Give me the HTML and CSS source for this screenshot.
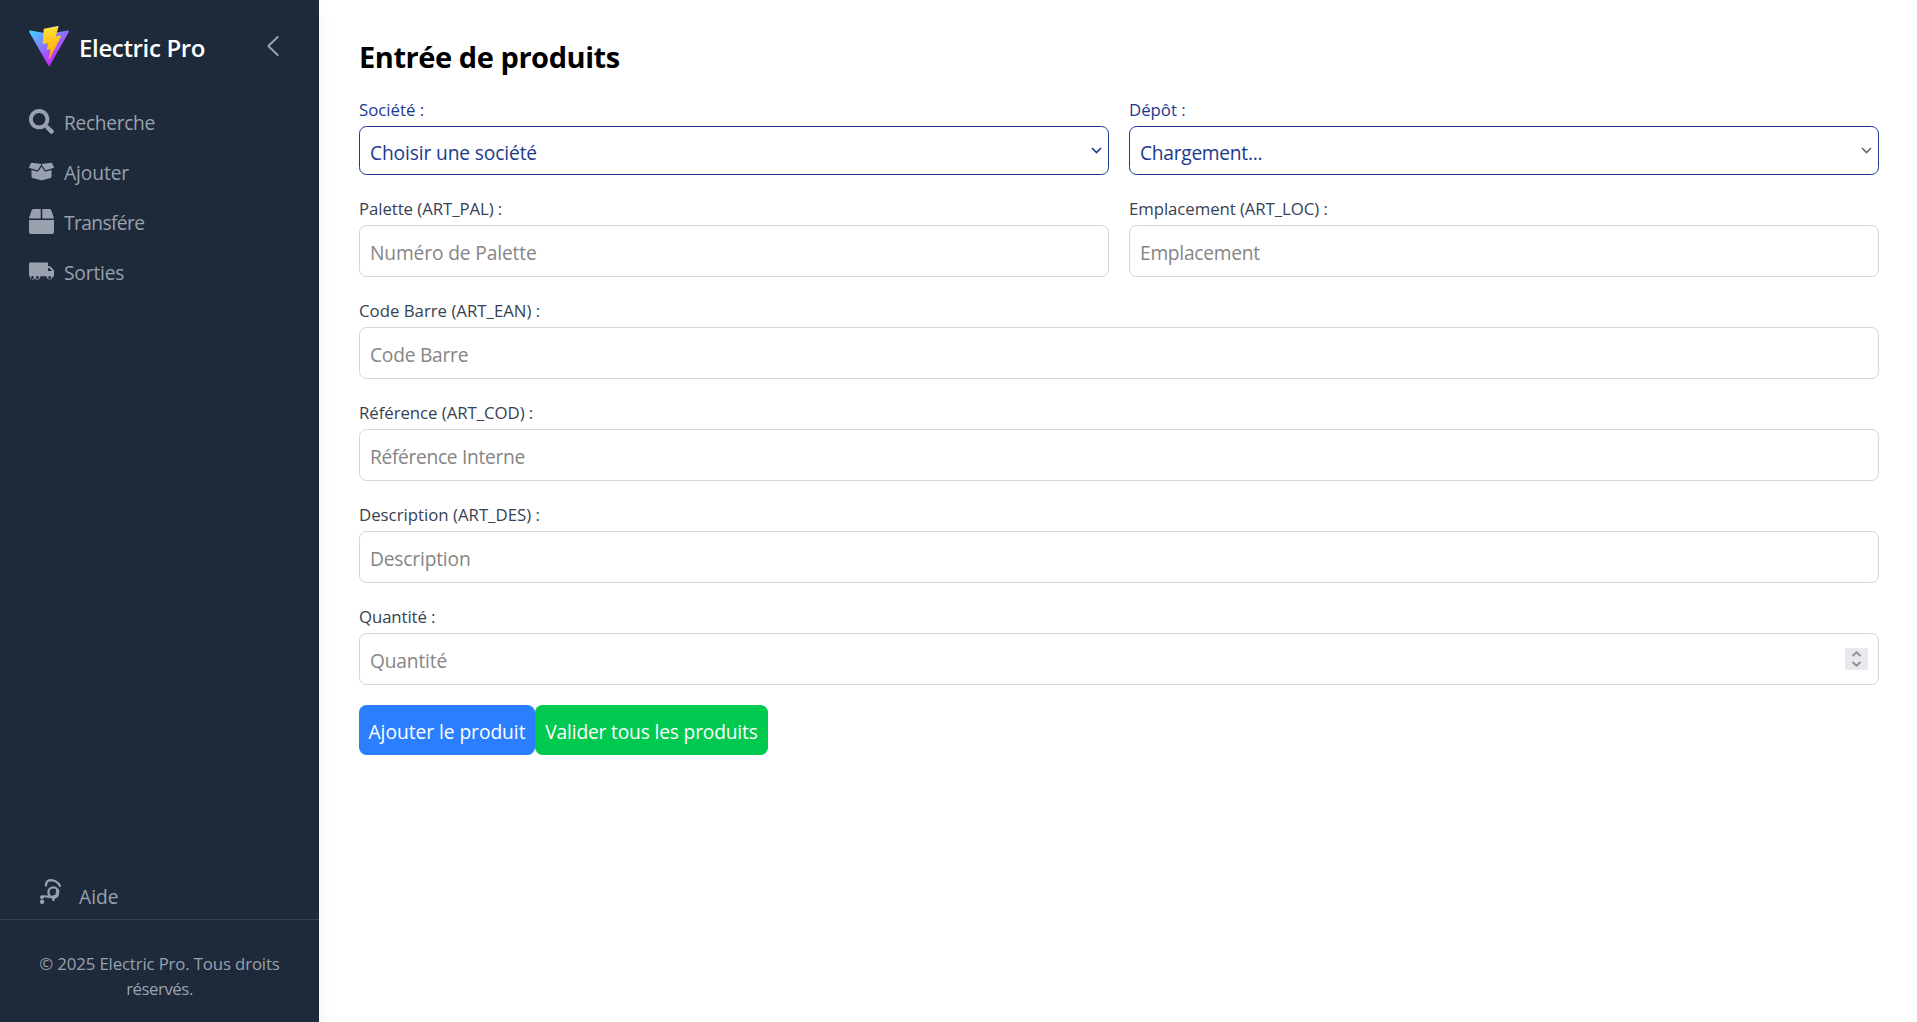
FILE: index.html
```html
<!DOCTYPE html>
<html lang="fr">
<head>
<meta charset="utf-8">
<title>Electric Pro</title>
<link rel="stylesheet" href="styles.css">
</head>
<body>
<div class="app">
  <aside class="sidebar">
    <header class="brand">
      <svg class="logo" viewBox="0 0 256 257" preserveAspectRatio="xMidYMid">
        <defs>
          <linearGradient id="g1" x1="-.828%" x2="57.636%" y1="7.652%" y2="78.411%"><stop offset="0%" stop-color="#41D1FF"/><stop offset="100%" stop-color="#BD34FE"/></linearGradient>
          <linearGradient id="g2" x1="43.376%" x2="50.316%" y1="2.242%" y2="89.03%"><stop offset="0%" stop-color="#FFEA83"/><stop offset="8.333%" stop-color="#FFDD35"/><stop offset="100%" stop-color="#FFA800"/></linearGradient>
        </defs>
        <path fill="url(#g1)" d="M255.153 37.938L134.897 252.976c-2.483 4.44-8.862 4.466-11.382.048L.875 37.958c-2.746-4.814 1.371-10.646 6.827-9.67l120.385 21.517a6.537 6.537 0 0 0 2.322-.004l117.867-21.483c5.438-.991 9.574 4.796 6.877 9.62Z"/>
        <path fill="url(#g2)" d="M185.432.063L96.44 17.501a3.268 3.268 0 0 0-2.634 3.014l-5.474 92.456a3.268 3.268 0 0 0 3.997 3.378l24.777-5.718c2.318-.535 4.413 1.507 3.936 3.838l-7.361 36.047c-.495 2.426 1.782 4.5 4.151 3.78l15.304-4.649c2.372-.72 4.652 1.36 4.15 3.788l-11.698 56.621c-.732 3.542 3.979 5.473 5.943 2.437l1.313-2.028l72.516-144.72c1.215-2.423-.88-5.186-3.54-4.672l-25.505 4.922c-2.396.462-4.435-1.77-3.759-4.114l16.646-57.705c.677-2.35-1.37-4.583-3.769-4.113Z"/>
      </svg>
      <span class="brand-name">Electric Pro</span>
      <svg class="collapse" viewBox="0 0 12 20"><path d="M10.6 1 1.4 10l9.2 9"/></svg>
    </header>
    <nav class="menu">
      <a class="item"><svg class="icon" viewBox="0 0 512 512"><path d="M505 442.7L405.3 343c-4.500-4.500-10.600-7-17-7H372c27.600-35.300 44-79.700 44-128C416 93.100 322.900 0 208 0S0 93.100 0 208s93.100 208 208 208c48.300 0 92.700-16.400 128-44v16.300c0 6.400 2.500 12.500 7 17l99.700 99.700c9.400 9.400 24.600 9.400 33.900 0l28.300-28.300c9.400-9.400 9.400-24.600.1-34zM208 336c-70.700 0-128-57.200-128-128 0-70.700 57.200-128 128-128 70.700 0 128 57.200 128 128 0 70.700-57.200 128-128 128z"/></svg><span class="t-search">Recherche</span></a>
      <a class="item"><svg class="icon" viewBox="0 0 640 512"><path d="M425.700 256c-16.900 0-32.800-9-41.400-23.400L320 126l-64.200 106.600c-8.700 14.500-24.600 23.500-41.500 23.500-4.500 0-9-.600-13.300-1.900L64 215v178c0 14.700 10 27.500 24.200 31l216.200 54.100c10.200 2.500 20.900 2.500 31 0L551.800 424c14.200-3.600 24.200-16.400 24.200-31V215l-137 39.100c-4.300 1.300-8.800 1.900-13.300 1.900zm212.600-112.200L586.800 41c-3.100-6.200-9.800-9.800-16.700-8.900L320 64l91.700 152.100c3.800 6.300 11.400 9.300 18.500 7.300l197.900-56.500c9.900-2.900 14.700-13.900 10.200-23.100zM53.200 41L1.700 143.800c-4.600 9.200.3 20.200 10.100 23l197.900 56.500c7.100 2 14.700-1 18.500-7.300L320 64 69.800 32.100c-6.900-.8-13.500 2.700-16.600 8.900z"/></svg><span class="t-add">Ajouter</span></a>
      <a class="item"><svg class="icon" viewBox="0 0 512 512"><path d="M509.500 184.600L458.900 32.800C452.400 13.200 434.100 0 413.400 0H272v192h238.700c-.4-2.500-.4-5-1.200-7.400zM240 0H98.600c-20.700 0-39 13.200-45.500 32.800L2.500 184.600c-.8 2.400-.8 4.900-1.200 7.400H240V0zM0 224v240c0 26.500 21.500 48 48 48h416c26.500 0 48-21.500 48-48V224H0z"/></svg><span class="t-move">Transfére</span></a>
      <a class="item"><svg class="icon" viewBox="0 0 25 25"><path fill-rule="evenodd" d="M1.300 3.500H18Q19 3.500 19 4.500V7.300H21.200L25 11.200V17.300H23.800A3.100 3.100 0 1 1 17.600 17.300H11.400A3 3 0 0 1 6 19.500 3 3 0 0 1 .7 17.300L0 16V4.800Q0 3.500 1.300 3.500ZM19 9.200V12H23.100L20.500 9.200ZM3.400 16.900A1.450 1.600 0 1 0 3.400 20.100 1.450 1.600 0 0 0 3.400 16.900ZM8.400 16.900A1.450 1.600 0 1 0 8.400 20.100 1.450 1.600 0 0 0 8.400 16.900ZM20.700 16.900A1.450 1.600 0 1 0 20.700 20.100 1.450 1.600 0 0 0 20.700 16.900Z"/></svg><span class="t-out">Sorties</span></a>
    </nav>
    <div class="help">
      <svg class="help-icon" viewBox="0 0 25 25"><g fill="none" stroke="currentColor"><path stroke-width="2.200" stroke-linecap="round" d="M6.900 6.600C7.100 3.300 8.500 1.200 11.300 1.100 15.300 1.100 19.200 3.200 21 7"/><circle cx="14.300" cy="13.300" r="4.900" stroke-width="2.300"/><path stroke-width="2" d="M1.500 18.300Q6 16.200 10.500 18.600"/></g><path d="M17.500 8.500 20.300 11 19.500 17.500 15.500 20.300V22.300L13.200 21.800V20L10 18.200 16.500 15.500Z"/><circle cx="3" cy="18.200" r="1.900"/><circle cx="3.100" cy="22.800" r="2.200"/></svg>
      <span class="t-help">Aide</span>
    </div>
    <footer class="legal"><span class="legal-a">© 2025 Electric Pro. Tous droits</span><br><span class="legal-b">réservés.</span></footer>
  </aside>
  <main class="content">
    <h1 class="title">Entrée de produits</h1>
    <form class="form">
      <div class="row">
        <div class="field blue">
          <label class="l-soc">Société :</label>
          <div class="box select"><select class="control c-soc"><option>Choisir une société</option></select><svg class="caret" viewBox="0 0 11 7"><path d="M1 1l4.500 4.500L10 1"/></svg></div>
        </div>
        <div class="field blue">
          <label class="l-dep">Dépôt :</label>
          <div class="box select"><select class="control c-dep"><option>Chargement...</option></select><svg class="caret muted" viewBox="0 0 11 7"><path d="M1 1l4.500 4.500L10 1"/></svg></div>
        </div>
      </div>
      <div class="row">
        <div class="field"><label class="l-pal">Palette (ART_PAL) :</label><div class="box"><input class="control c-pal" placeholder="Numéro de Palette"></div></div>
        <div class="field"><label class="l-loc">Emplacement (ART_LOC) :</label><div class="box"><input class="control c-loc" placeholder="Emplacement"></div></div>
      </div>
      <div class="field"><label class="l-ean">Code Barre (ART_EAN) :</label><div class="box"><input class="control c-ean" placeholder="Code Barre"></div></div>
      <div class="field"><label class="l-cod">Référence (ART_COD) :</label><div class="box"><input class="control c-cod" placeholder="Référence Interne"></div></div>
      <div class="field"><label class="l-des">Description (ART_DES) :</label><div class="box"><input class="control c-des" placeholder="Description"></div></div>
      <div class="field"><label class="l-qty">Quantité :</label><div class="box"><input class="control c-qty" placeholder="Quantité"><span class="spinner"><svg viewBox="0 0 23 22"><path d="M7.500 8 11.500 4.300 15.500 8M7.500 14 11.500 17.700 15.500 14"/></svg></span></div></div>
      <div class="actions">
        <button type="button" class="btn add">Ajouter le produit</button>
        <button type="button" class="btn validate">Valider tous les produits</button>
      </div>
    </form>
  </main>
</div>
</body>
</html>
```
FILE: styles.css
```css
* { box-sizing: border-box; }
body { margin: 0; background: #fff; font-family: "Open Sans", "Noto Sans", sans-serif; font-size: 19.2px; line-height: 30px; }
.app { display: flex; height: 1022px; overflow: hidden; }

.sidebar { display: flex; flex-direction: column; flex: none; width: 319px; background: #1e2939; color: #99a1af; box-shadow: 0 12px 19px -4px rgba(0,0,0,.1); }
.brand { display: flex; align-items: center; height: 92px; padding: 0 40px 0 29px; color: #fff; }
.logo { width: 40px; height: 40px; }
.brand-name { margin: 3px auto 0 10px; font-size: 24px; font-weight: 600; letter-spacing: -.35px; }
.collapse { width: 12px; height: 20px; fill: none; stroke: #99a1af; stroke-width: 2; stroke-linecap: round; stroke-linejoin: round; }
.menu { display: flex; flex-direction: column; gap: 20px; padding: 15px 29px 0; }
.item { display: flex; align-items: center; gap: 10px; height: 30px; }
.item span { padding-top: 2px; }
.icon { width: 25px; height: 25px; fill: currentColor; margin-bottom: 1px; }
.t-search { letter-spacing: -.33px; }
.t-add { letter-spacing: -.1px; }
.t-move { letter-spacing: -.6px; }
.t-out { letter-spacing: -.17px; }
.help { display: flex; align-items: center; gap: 15px; margin-top: auto; height: 50px; padding-left: 39px; }
.help-icon { width: 25px; height: 25px; fill: currentColor; margin-bottom: 6px; }
.t-help { padding-top: 6px; }
.legal { height: 103px; border-top: 1px solid #364153; padding-top: 31px; text-align: center; font-size: 16.8px; line-height: 25px; white-space: nowrap; }
.legal-a { letter-spacing: -.14px; }
.legal-b { letter-spacing: -.45px; }

.content { flex: 1; padding: 37px 38px 0 40px; }
.title { margin: 0 0 19px; font-size: 29px; line-height: 40px; font-weight: 700; letter-spacing: -.44px; }
.form, .field { display: flex; flex-direction: column; }
.form { gap: 20px; }
.row { display: grid; grid-template-columns: 1fr 1fr; gap: 20px; }
.field { gap: 5px; align-items: stretch; color: #364153; }
.field label { align-self: flex-start; height: 25px; font-size: 16.8px; line-height: 27px; }
.l-pal, .l-loc { letter-spacing: -.07px; }
.l-qty { letter-spacing: -.1px; }
.l-cod { letter-spacing: -.05px; }
.box { display: flex; align-items: center; height: 52px; padding: 0 10px; border: 1px solid #d1d5dc; border-radius: 7.5px; }
.control { appearance: none; flex: 1; min-width: 0; margin: 0; padding: 4px 0 0; border: 0; outline: 0; background: none; color: inherit; font: inherit; }
.control::placeholder { color: #858585; }
.c-soc, .c-pal { letter-spacing: -.13px; }
.c-dep, .c-loc { letter-spacing: -.28px; }
.c-ean { letter-spacing: -.24px; }
.c-cod { letter-spacing: -.32px; }
.c-des, .c-qty { letter-spacing: -.18px; }
.blue { color: #1c398e; }
.select { height: 49px; padding-right: 6px; border-color: #1c398e; }
.caret { width: 11px; height: 7px; fill: none; stroke: #1c398e; stroke-width: 1.6; }
.muted { stroke: #666; }
.spinner { width: 23px; height: 22px; background: #e9e9ed; }
.spinner svg { display: block; fill: none; stroke: #8f8f9d; stroke-width: 2; }
.actions { display: flex; }
.btn { height: 50px; padding: 4px 0 0; border: 0; border-radius: 7.5px; color: #fff; font: inherit; white-space: nowrap; }
.add { width: 176px; background: #2b7fff; letter-spacing: -.04px; }
.validate { width: 233px; background: #00c950; letter-spacing: -.17px; }
```
